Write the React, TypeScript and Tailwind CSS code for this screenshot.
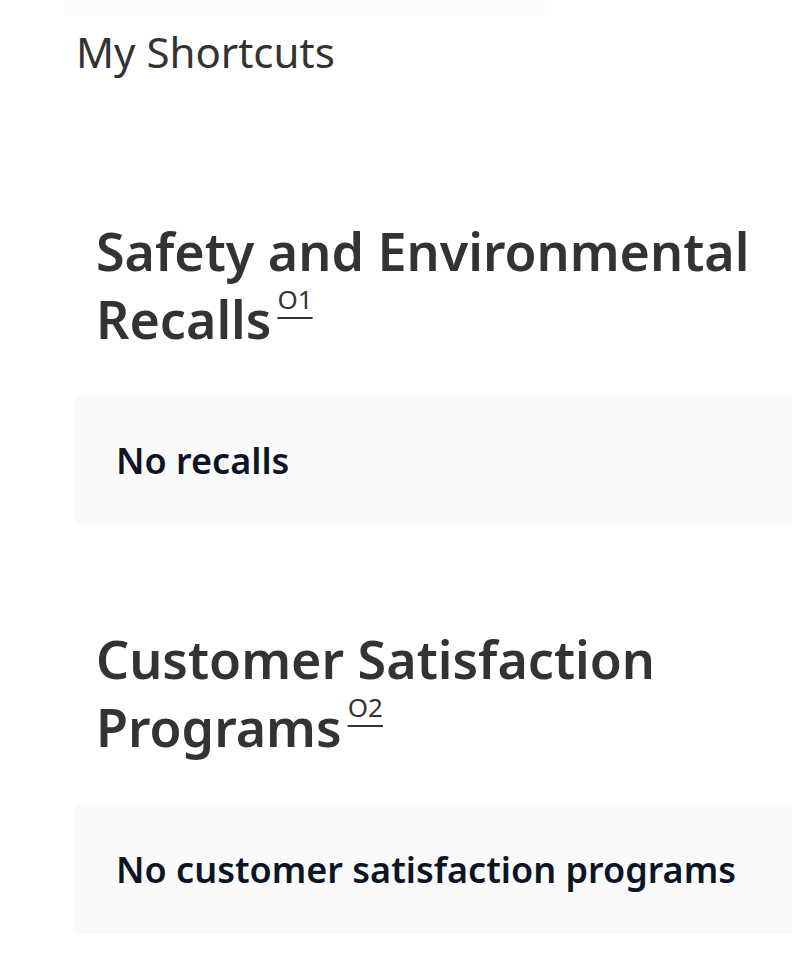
import React from 'react';

const sections = [
  { first: 'Safety and Environmental', last: 'Recalls', note: 'O1', empty: 'No recalls', top: 'mt-[141px]', gap: 'mt-[43px]' },
  { first: 'Customer Satisfaction', last: 'Programs', note: 'O2', empty: 'No customer satisfaction programs', top: 'mt-[100px]', gap: 'mt-[44px]' },
];

export default function App() {
  return (
    <div className="min-h-screen w-full overflow-hidden bg-white font-['Noto_Sans',sans-serif] text-[#333333]">
      <div className="ml-[64px] h-[15px] w-[481px] bg-[#fcfcfc]" />
      <div className="ml-[76px] mt-[13px] text-[42px] leading-[48px]">My Shortcuts</div>

      {sections.map((s) => (
        <div key={s.note} className={s.top}>
          <h2 className="ml-[96px] text-[52px] font-semibold leading-[68px]">
            {s.first}
            <br />
            {s.last}
            <sup className="relative top-[-12px] ml-[6px] align-super text-[26px] font-normal leading-none">
              <a href="#" className="underline underline-offset-8">{s.note}</a>
            </sup>
          </h2>
          <div className={`ml-[75px] ${s.gap} flex h-[129px] items-center bg-[#fafafa] pl-[41px]`}>
            <span className="text-[36px] font-semibold text-[#0b1526]">{s.empty}</span>
          </div>
        </div>
      ))}
    </div>
  );
}
